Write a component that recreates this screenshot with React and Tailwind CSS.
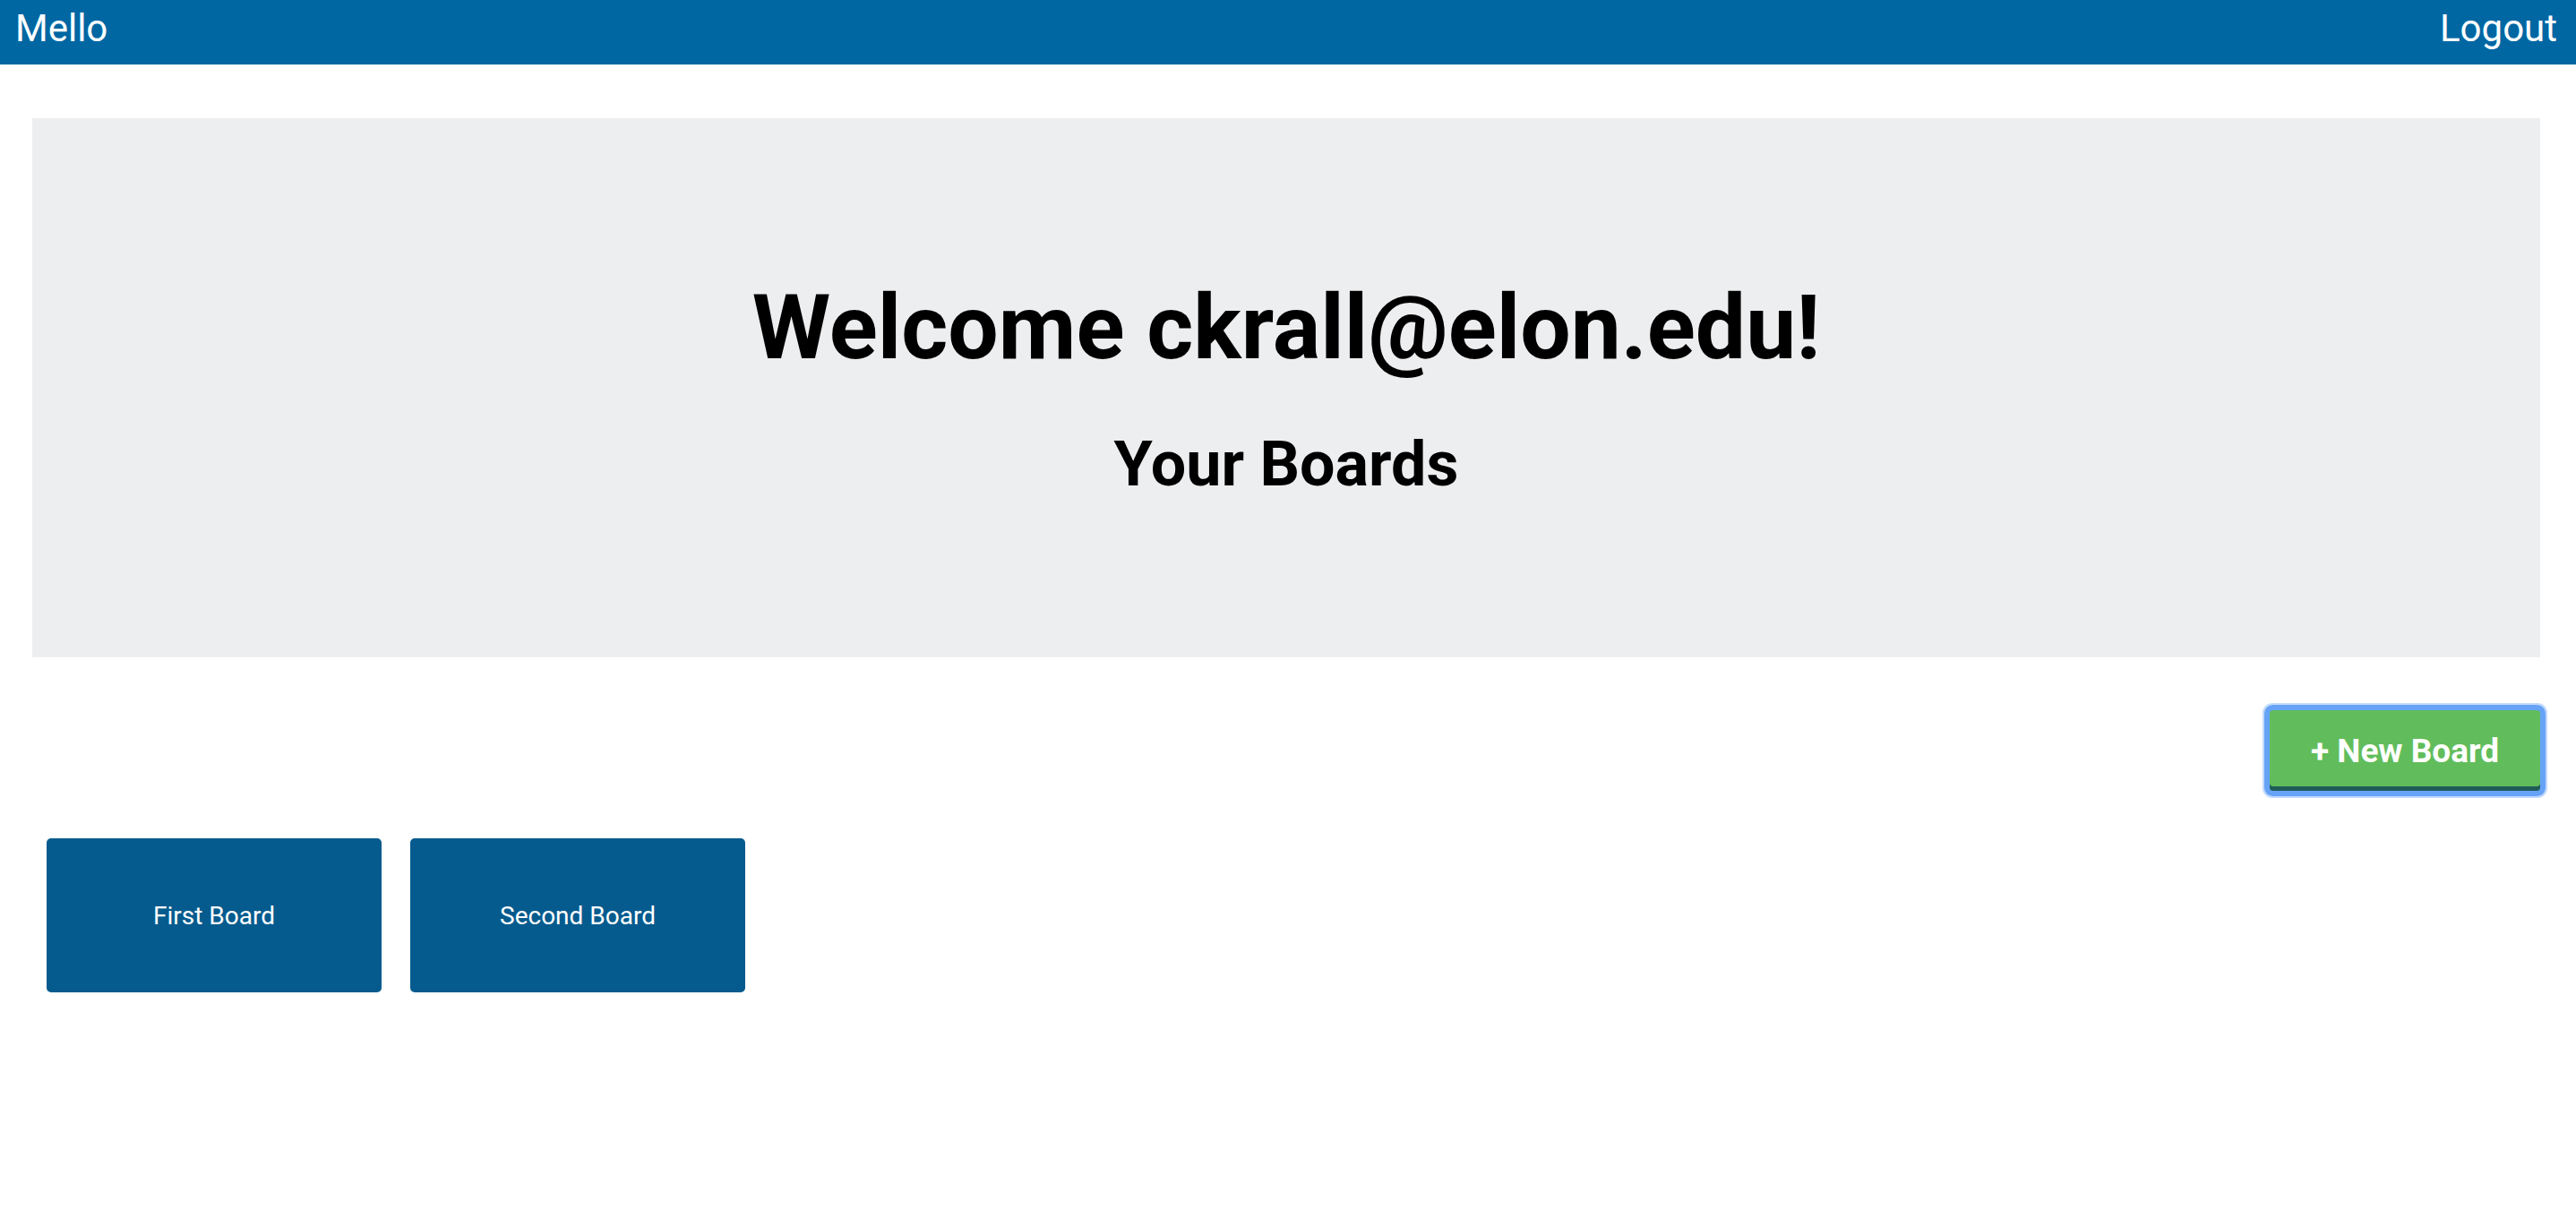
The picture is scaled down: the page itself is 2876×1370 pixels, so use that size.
export default function App() {
  const boards = ["First Board", "Second Board"];

  return (
    <div className="min-h-screen bg-white font-['Roboto',sans-serif]">
      <header className="h-[72px] bg-[#0067a3] flex justify-between items-start pt-[7px] pl-[17px] pr-[21px] text-white text-[42px] leading-[1.2]">
        <span>Mello</span>
        <span>Logout</span>
      </header>

      <main className="pl-[36px] pr-[40px] pt-[60px]">
        <section className="h-[602px] bg-[#edeef0] flex flex-col items-center justify-center gap-[50px] text-black">
          <h1 className="text-[100px] font-bold leading-[1.2]">Welcome ckrall@elon.edu!</h1>
          <h2 className="text-[70px] font-bold leading-[1.2]">Your Boards</h2>
        </section>

        <div className="flex justify-end mt-[59px]">
          <button className="w-[302px] h-[90px] pt-[2px] rounded-[4px] bg-[#61bd5b] text-white text-[37px] font-bold shadow-[inset_0_-5px_0_rgba(10,60,90,0.75),0_0_0_6px_#66a3f6,0_0_0_8px_#c2dafc]">
            + New Board
          </button>
        </div>

        <div className="flex gap-[32px] pl-[16px] mt-[53px]">
          {boards.map((b) => (
            <div key={b} className="w-[374px] h-[172px] pt-[2px] rounded-[5px] bg-[#065b8e] text-white text-[28px] flex items-center justify-center">
              {b}
            </div>
          ))}
        </div>
      </main>
    </div>
  );
}
